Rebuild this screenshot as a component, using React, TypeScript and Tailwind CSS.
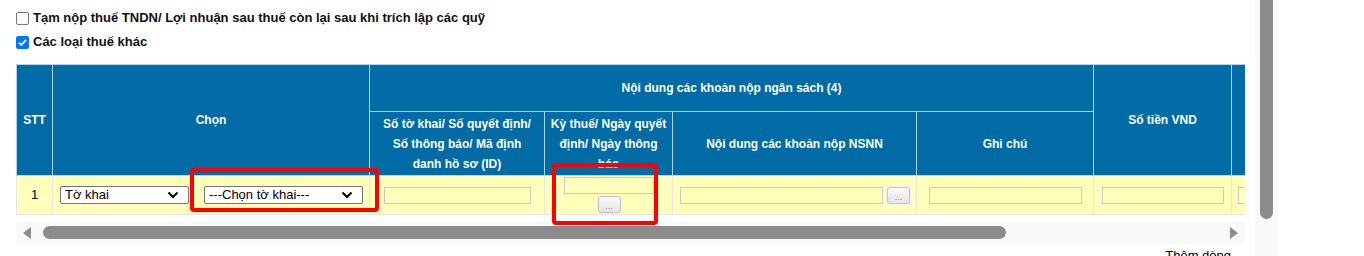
import React from 'react';

const font = { fontFamily: '"Liberation Sans", Arial, sans-serif' };

function Chevron() {
    return (
        <svg width="12" height="8" viewBox="0 0 12 8" className="shrink-0">
            <path d="M1.5 1.5 L6 6 L10.5 1.5" fill="none" stroke="#000" strokeWidth="2" />
        </svg>
    );
}

function Select({ label, width }: { label: string; width: string }) {
    return (
        <div className={`${width} h-[18px] bg-white border border-[#767676] rounded-[2px] flex items-center justify-between pl-[4px] pr-[9px] text-[13px] text-black`}>
            <span>{label}</span>
            <Chevron />
        </div>
    );
}

function DotsButton() {
    return (
        <div className="w-[23px] h-[17px] border border-[#c4c4c4] rounded-[3px] bg-gradient-to-b from-[#fbfbfb] to-[#e4e4e4] flex items-end justify-center pb-[3px] text-[9px] leading-[6px] text-[#888] shadow-[0_0_0_1px_#f0f0f0]">
            ...
        </div>
    );
}

function TextBox({ width }: { width: string }) {
    return <div className={`${width} h-[17px] border border-[#cbcbcb] bg-[#ffffbb]`} />;
}

export default function App() {
    const th = 'border border-[#a9d5f2] text-white font-bold text-[12px] leading-[20px] text-center align-middle';
    const td = 'border border-[#e6e6e6] align-middle';

    return (
        <div className="w-[1364px] h-[256px] bg-white overflow-hidden flex" style={font}>
            <div className="w-[1255px] shrink-0 pl-[16px] pt-[6px] relative">
                <label className="h-[24px] flex items-center gap-[4px] text-[13px] font-bold text-[#111]">
                    <span className="w-[13px] h-[13px] border border-[#767676] rounded-[2px] bg-white" />
                    Tạm nộp thuế TNDN/ Lợi nhuận sau thuế còn lại sau khi trích lập các quỹ
                </label>
                <label className="h-[24px] flex items-center gap-[4px] text-[13px] font-bold text-[#111]">
                    <span className="w-[13px] h-[13px] rounded-[2px] bg-[#0075ff] flex items-center justify-center">
                        <svg width="11" height="11" viewBox="0 0 11 11">
                            <path d="M2 5.6 L4.4 8 L9 2.8" fill="none" stroke="#fff" strokeWidth="1.8" />
                        </svg>
                    </span>
                    Các loại thuế khác
                </label>

                <div className="mt-[10px] w-[1229px] overflow-hidden">
                    <table className="border-collapse table-fixed w-[1315px]">
                        <colgroup>
                            <col className="w-[36px]" />
                            <col className="w-[317px]" />
                            <col className="w-[175px]" />
                            <col className="w-[128px]" />
                            <col className="w-[244px]" />
                            <col className="w-[177px]" />
                            <col className="w-[138px]" />
                            <col className="w-[100px]" />
                        </colgroup>
                        <thead className="bg-[#006ba5]">
                            <tr className="h-[47px]">
                                <th rowSpan={2} className={th}>STT</th>
                                <th rowSpan={2} className={th}>Chọn</th>
                                <th colSpan={4} className={th}>Nội dung các khoản nộp ngân sách (4)</th>
                                <th rowSpan={2} className={th}>Số tiền VND</th>
                                <th rowSpan={2} className={th}></th>
                            </tr>
                            <tr className="h-[64px]">
                                <th className={`${th} px-[10px]`}>Số tờ khai/ Số quyết định/ Số thông báo/ Mã định danh hồ sơ (ID)</th>
                                <th className={`${th} px-[4px]`}>Kỳ thuế/ Ngày quyết định/ Ngày thông báo</th>
                                <th className={th}>Nội dung các khoản nộp NSNN</th>
                                <th className={th}>Ghi chú</th>
                            </tr>
                        </thead>
                        <tbody className="bg-[#ffffbb]">
                            <tr className="h-[39px]">
                                <td className={`${td} text-center text-[13px] text-black`}>1</td>
                                <td className={td}>
                                    <div className="flex items-center gap-[15px] pl-[7px]">
                                        <Select label="Tờ khai" width="w-[129px]" />
                                        <Select label="---Chọn tờ khai---" width="w-[159px]" />
                                    </div>
                                </td>
                                <td className={td}>
                                    <div className="flex justify-center pt-[1px]">
                                        <TextBox width="w-[147px]" />
                                    </div>
                                </td>
                                <td className={td}>
                                    <div className="flex flex-col items-center gap-[2px] pl-[1px]">
                                        <TextBox width="w-[90px]" />
                                        <DotsButton />
                                    </div>
                                </td>
                                <td className={td}>
                                    <div className="flex items-center gap-[4px] pl-[7px]">
                                        <TextBox width="w-[203px]" />
                                        <DotsButton />
                                    </div>
                                </td>
                                <td className={td}>
                                    <div className="flex justify-center">
                                        <TextBox width="w-[153px]" />
                                    </div>
                                </td>
                                <td className={td}>
                                    <div className="flex justify-center">
                                        <TextBox width="w-[122px]" />
                                    </div>
                                </td>
                                <td className={td}>
                                    <div className="pl-[6px]">
                                        <TextBox width="w-[80px]" />
                                    </div>
                                </td>
                            </tr>
                        </tbody>
                    </table>
                </div>

                <div className="mt-[6px] w-[1229px] h-[23px] bg-[#f9f9f9] flex items-center px-[6px] gap-[11px]">
                    <svg width="10" height="12" viewBox="0 0 10 12" className="shrink-0">
                        <path d="M9 0 L9 12 L1 6 Z" fill="#8c8c8c" />
                    </svg>
                    <div className="w-[963px] h-[13px] rounded-full bg-[#8c8c8c]" />
                    <div className="flex-1" />
                    <svg width="10" height="12" viewBox="0 0 10 12" className="shrink-0">
                        <path d="M1 0 L1 12 L9 6 Z" fill="#8c8c8c" />
                    </svg>
                </div>

                <div className="w-[1229px] text-right pr-[14px] pt-[4px] text-[13px] leading-[16px] text-black">Thêm dòng</div>

                <div className="absolute left-[190px] top-[168px] w-[189px] h-[44px] border-[4px] border-[#ff0000] rounded-[4px]" />
                <div className="absolute left-[552px] top-[163px] w-[106px] h-[62px] border-[4px] border-[#ff0000] rounded-[4px]" />
            </div>
            <div className="w-[23px] h-full bg-[#fafafa] flex justify-center">
                <div className="w-[13px] h-[219px] rounded-b-full bg-[#8c8c8c]" />
            </div>
        </div>
    );
}
